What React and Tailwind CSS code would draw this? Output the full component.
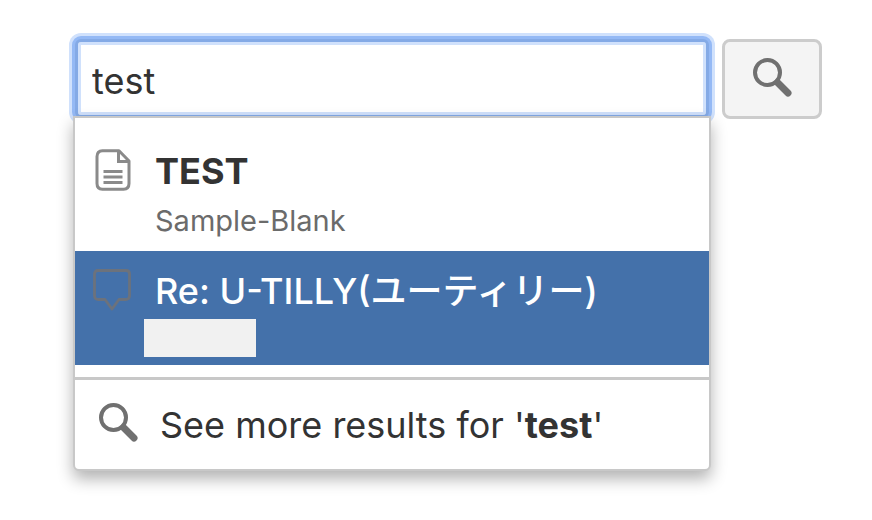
import React, { useState } from 'react';

const results = [
  { id: 'page', title: 'TEST', space: 'Sample-Blank', icon: 'page' },
  { id: 'reply', title: 'Re: U-TILLY(ユーティリー)', space: null, icon: 'comment' },
];

function SearchIcon({ className }) {
  return (
    <svg viewBox="0 0 40 40" className={className} fill="none" stroke="currentColor" aria-hidden="true">
      <circle cx="15.500" cy="14.500" r="12.500" strokeWidth="4" />
      <path d="M25.500 24.500l10.500 10.500" strokeWidth="7" strokeLinecap="round" />
    </svg>
  );
}

function PageIcon() {
  return (
    <svg viewBox="0 0 36 42" className="w-9 h-[42px] text-[#8a8a8a]" fill="none" stroke="currentColor" aria-hidden="true">
      <path d="M24 1.700H7.500Q2 2 2 7.500v27Q2 40 7.500 40.300h21Q34 40 34 34.500V12z" strokeWidth="3" strokeLinejoin="round" />
      <path d="M23.500 2v10.500H34" strokeWidth="3" />
      <path d="M8.500 22.500h19M8.500 28h19M8.500 33.500h19" strokeWidth="2.800" />
    </svg>
  );
}

function CommentIcon() {
  return (
    <svg viewBox="0 0 38 42" className="w-[38px] h-[42px] -ml-0.5 text-[#6c727c]" fill="none" stroke="currentColor" aria-hidden="true">
      <path d="M5 1.500h28q3.500 0 3.500 3.500v21.500q0 4-4 4H26L19 40l-7-9.500H5.500q-4 0-4-4V5q0-3.500 3.500-3.500z" strokeWidth="2.800" strokeLinejoin="round" />
    </svg>
  );
}

export default function App() {
  const [query, setQuery] = useState('test');
  const [active, setActive] = useState('reply');

  return (
    <form
      onSubmit={(e) => e.preventDefault()}
      className="flex items-start gap-[11px] pt-[39px] pb-12 pl-[73px] pr-[50px] bg-white text-[#333333] font-['Inter','Noto_Sans_CJK_JP',sans-serif]"
    >
      <div className="flex-1 min-w-0">
        <div className="px-0.5">
          <input
            type="text"
            aria-label="Search"
            value={query}
            onChange={(e) => setQuery(e.target.value)}
            className="block w-full h-[79px] px-3.5 pt-1 text-[36px] bg-white border-3 border-[#84aae6] rounded-md outline-none shadow-[0_0_0_3px_#94b9f5,0_0_0_6px_#d0e1fc,inset_0_0_0_3px_#d0e1fc]"
          />
        </div>

        {/* Suggestions */}
        <div className="relative -mt-0.5 bg-white border-2 border-[#c8c8c8] rounded-b-md shadow-[0_8px_16px_rgba(0,0,0,0.3)]">
          <ul className="pt-[13px] pb-3">
            {results.map((item) => (
              <li key={item.id}>
                <a
                  href="#"
                  onMouseEnter={() => setActive(item.id)}
                  className={`flex gap-6 pt-4 pb-2 pl-5 pr-4 ${active === item.id ? 'bg-[#4471aa] text-white' : 'text-[#333333]'}`}
                >
                  <span className="w-9 shrink-0 pt-0.5">
                    {item.icon === 'page' ? <PageIcon /> : <CommentIcon />}
                  </span>
                  <span className="min-w-0">
                    <span className={`block text-[36px] leading-[48px] ${item.icon === 'page' ? 'font-bold' : 'font-medium'}`}>{item.title}</span>
                    {item.space ? (
                      <span className="block mt-1 text-[29px] leading-[44px] text-[#6b6b6b]">{item.space}</span>
                    ) : (
                      <span className="block mt-1 -ml-[11px] w-28 h-[38px] bg-[#f1f1f1]" />
                    )}
                  </span>
                </a>
              </li>
            ))}
          </ul>
          <a href="#" className="flex items-center gap-[22px] h-[92px] pl-[23px] pr-4 border-t-3 border-[#c8c8c8] text-[36px]">
            <SearchIcon className="w-10 h-10 shrink-0 mb-1 text-[#707070]" />
            <span>
              See more results for '<b className="font-bold">{query}</b>'
            </span>
          </a>
        </div>
      </div>

      <button
        type="submit"
        aria-label="Search"
        className="flex justify-center w-[100px] h-20 pt-4 bg-[#f4f4f4] border-3 border-[#cccccc] rounded-lg text-[#707070]"
      >
        <SearchIcon className="w-10 h-10" />
      </button>
    </form>
  );
}
